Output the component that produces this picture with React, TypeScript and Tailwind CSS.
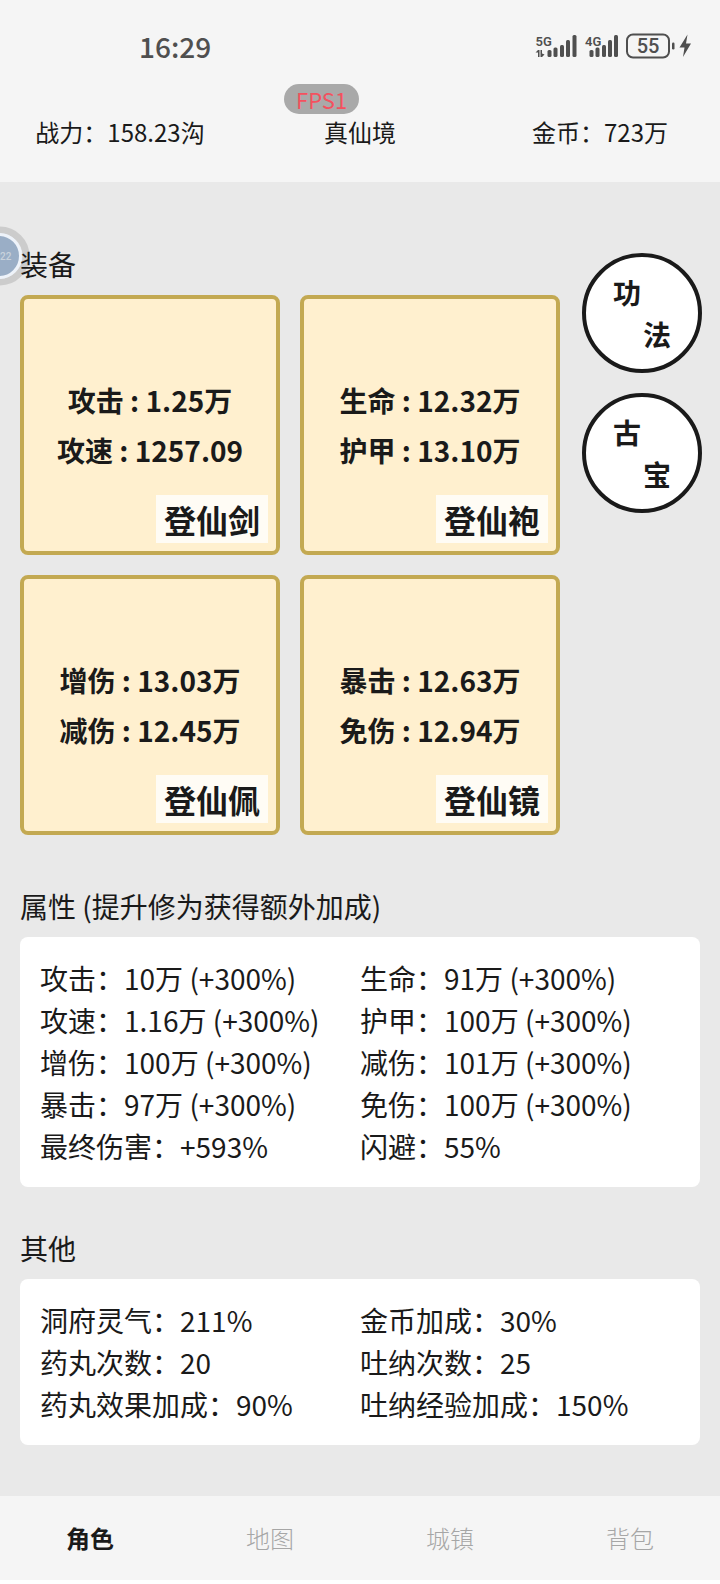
import { useState } from 'react'
import clsx from 'clsx'

interface Stat {
  label: string
  value: string
}

interface Equipment {
  name: string
  stats: Stat[]
}

const EQUIPMENTS: Equipment[] = [
  {
    name: '登仙剑',
    stats: [
      { label: '攻击', value: '1.25万' },
      { label: '攻速', value: '1257.09' },
    ],
  },
  {
    name: '登仙袍',
    stats: [
      { label: '生命', value: '12.32万' },
      { label: '护甲', value: '13.10万' },
    ],
  },
  {
    name: '登仙佩',
    stats: [
      { label: '增伤', value: '13.03万' },
      { label: '减伤', value: '12.45万' },
    ],
  },
  {
    name: '登仙镜',
    stats: [
      { label: '暴击', value: '12.63万' },
      { label: '免伤', value: '12.94万' },
    ],
  },
]

const ATTRIBUTES: Stat[] = [
  { label: '攻击', value: '10万 (+300%)' },
  { label: '生命', value: '91万 (+300%)' },
  { label: '攻速', value: '1.16万 (+300%)' },
  { label: '护甲', value: '100万 (+300%)' },
  { label: '增伤', value: '100万 (+300%)' },
  { label: '减伤', value: '101万 (+300%)' },
  { label: '暴击', value: '97万 (+300%)' },
  { label: '免伤', value: '100万 (+300%)' },
  { label: '最终伤害', value: '+593%' },
  { label: '闪避', value: '55%' },
]

const OTHERS: Stat[] = [
  { label: '洞府灵气', value: '211%' },
  { label: '金币加成', value: '30%' },
  { label: '药丸次数', value: '20' },
  { label: '吐纳次数', value: '25' },
  { label: '药丸效果加成', value: '90%' },
  { label: '吐纳经验加成', value: '150%' },
]

const TABS = ['角色', '地图', '城镇', '背包']

function StatusIcons() {
  return (
    <svg className="h-7 w-40" viewBox="0 0 160 28" fill="#4f4f4f" aria-hidden="true">
      {/* 5G */}
      <text x="1.5" y="13.5" fontSize="13" fontWeight="600" fontFamily="Roboto, sans-serif">5G</text>
      <path d="M1.5 20.5L4 18h1.5v7H4v-4.5zM6.5 18H8v3.5l2.5 1-2.5 2.5H6.5z" />
      <rect x="13.5" y="18" width="4" height="7" rx="1.5" />
      <rect x="19.5" y="15.5" width="4" height="9.5" rx="1.5" />
      <rect x="26" y="13" width="4" height="12" rx="1.5" />
      <rect x="32" y="8" width="4" height="17" rx="1.5" />
      <rect x="38.5" y="3" width="4" height="22" rx="1.5" />
      {/* 4G */}
      <text x="51" y="13.5" fontSize="13" fontWeight="600" fontFamily="Roboto, sans-serif">4G</text>
      <rect x="55.5" y="18" width="4" height="7" rx="1.5" />
      <rect x="61.5" y="15.5" width="4" height="9.5" rx="1.5" />
      <rect x="68" y="13" width="4" height="12" rx="1.5" />
      <rect x="74" y="8" width="4" height="17" rx="1.5" />
      <rect x="80" y="3" width="4" height="22" rx="1.5" />
      {/* Battery */}
      <rect x="93" y="2.5" width="42" height="23" rx="6" fill="none" stroke="#4f4f4f" strokeWidth="2" />
      <text x="114" y="21" fontSize="20" fontWeight="500" textAnchor="middle" fontFamily="Roboto, sans-serif">55</text>
      <rect x="138" y="10.5" width="2.5" height="7" rx="1.2" />
      <path d="M153.5 2.5L145.5 15.5h5l-1.5 9.5 8-13.5h-5z" />
    </svg>
  )
}

function EquipmentCard({ equipment }: { equipment: Equipment }) {
  return (
    <div className="relative flex aspect-square flex-col items-center justify-center rounded-lg border-4 border-[#c3a952] bg-[#fff0cf] font-bold">
      {equipment.stats.map((stat) => (
        <p key={stat.label} className="text-[28px] leading-[50px]">
          {stat.label} : {stat.value}
        </p>
      ))}
      <span className="absolute right-2 bottom-2 bg-white/80 px-2 text-[32px] leading-[48px]">
        {equipment.name}
      </span>
    </div>
  )
}

function RoundButton({ text }: { text: string }) {
  return (
    <button
      type="button"
      aria-label={text}
      className="flex size-[120px] flex-col items-center justify-center rounded-full border-4 border-[#1a1a1a] bg-white text-[28px] leading-[42px] font-bold"
    >
      <span className="pr-[30px]">{text[0]}</span>
      <span className="pl-[30px]">{text[1]}</span>
    </button>
  )
}

function StatPanel({ title, stats }: { title: string; stats: Stat[] }) {
  return (
    <section className="mx-5 text-[28px] leading-[42px]">
      <h2 className="mb-2.5">{title}</h2>
      <dl className="grid grid-cols-2 rounded-lg bg-white p-5">
        {stats.map((stat) => (
          <div key={stat.label} className="flex whitespace-nowrap">
            <dt>{stat.label}：</dt>
            <dd>{stat.value}</dd>
          </div>
        ))}
      </dl>
    </section>
  )
}

export default function App() {
  const [activeTab, setActiveTab] = useState('角色')

  return (
    <div className="flex min-h-screen flex-col bg-white pb-1 font-['Noto_Sans_CJK_SC',sans-serif] text-[#1a1a1a]">
      <header className="relative bg-[#f5f5f5] pt-6 pb-8">
        {/* Status bar */}
        <div className="flex h-11 items-center justify-between pr-[26px] pl-[139px] text-[#4f4f4f]">
          <span className="text-[28px] font-medium">16:29</span>
          <StatusIcons />
        </div>

        <div className="mt-[46px] grid grid-cols-3 text-center text-2xl leading-9">
          <span>战力：158.23沟</span>
          <span>真仙境</span>
          <span>金币：723万</span>
        </div>

        <span className="absolute top-[84px] left-[284px] rounded-full bg-[#a9a9a9] px-3 text-[22px] leading-[30px] text-[#f4515f]">
          FPS1
        </span>
      </header>

      <main className="relative flex-1 bg-[#e9e9e9] pt-[61px] pb-[51px]">
        {/* Floating ball */}
        <svg className="absolute top-11 left-0 h-15 w-8" viewBox="0 0 32 60" aria-hidden="true">
          <circle cx="0" cy="30" r="26" fill="none" stroke="#000" strokeOpacity="0.12" strokeWidth="7" />
          <circle cx="-1" cy="30" r="21.5" fill="#9aaec6" stroke="#eef3fa" strokeWidth="3" />
          <text x="0" y="34" fontSize="10" fontWeight="500" fill="#c8d2dc" fontFamily="Roboto, sans-serif">22</text>
        </svg>

        <div className="flex gap-[22px] pr-[18px] pl-5">
          <section className="flex-1">
            <h2 className="relative mb-2.5 text-[28px] leading-[42px]">装备</h2>
            <div className="grid grid-cols-2 gap-5">
              {EQUIPMENTS.map((equipment) => (
                <EquipmentCard key={equipment.name} equipment={equipment} />
              ))}
            </div>
          </section>
          <aside className="flex flex-col gap-5 pt-[10px]">
            <RoundButton text="功法" />
            <RoundButton text="古宝" />
          </aside>
        </div>

        <div className="mt-[50px] flex flex-col gap-10">
          <StatPanel title="属性 (提升修为获得额外加成)" stats={ATTRIBUTES} />
          <StatPanel title="其他" stats={OTHERS} />
        </div>
      </main>

      <nav className="grid h-[84px] grid-cols-4 bg-[#f5f5f5] text-2xl">
        {TABS.map((tab) => (
          <button
            key={tab}
            type="button"
            onClick={() => setActiveTab(tab)}
            className={clsx(activeTab === tab ? 'font-bold' : 'font-light text-[#a6a6a6]')}
          >
            {tab}
          </button>
        ))}
      </nav>
    </div>
  )
}
